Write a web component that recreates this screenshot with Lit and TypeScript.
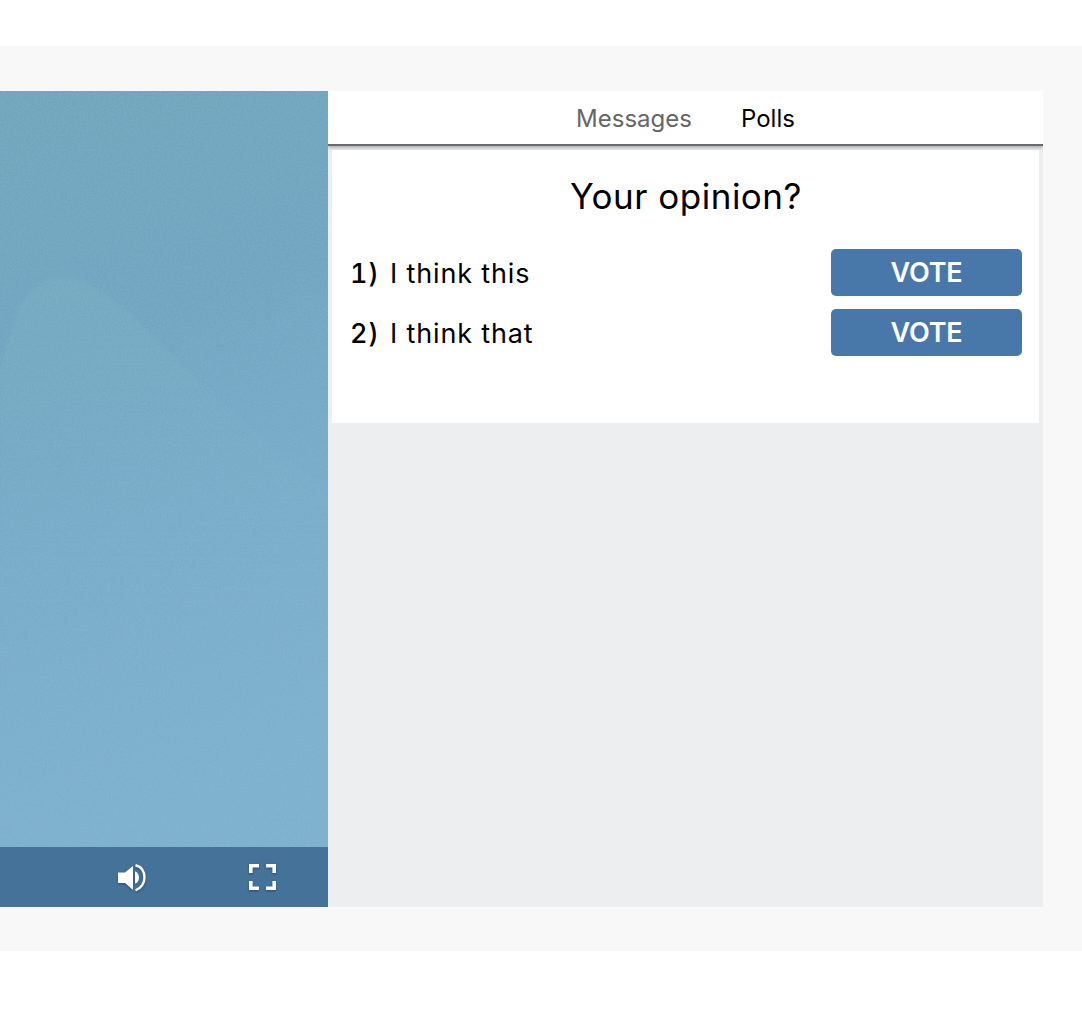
import { LitElement, html, css } from "lit";
import { customElement } from "lit/decorators.js";

@customElement("app-root")
export class AppRoot extends LitElement {
  static styles = css`
    :host { display: block; width: 1082px; height: 1016px; background: #fff; font-family: "Inter", "Noto Sans", sans-serif; color: #000; overflow: hidden; padding-top: 46px; box-sizing: border-box; }
    .band { height: 905px; background: #f8f8f8; display: flex; padding: 45px 39px 44px 0; box-sizing: border-box; }
    .video { width: 328px; flex: none; display: flex; flex-direction: column; overflow: hidden; }
    .scene { flex: 1; display: block; min-height: 0; }
    .bar { height: 60px; background: #447299; display: flex; align-items: center; flex: none; }
    .bar svg { display: block; overflow: visible; filter: drop-shadow(0 1px 1px rgba(0,0,0,.35)); }
    .vol { margin-left: 118px; }
    .full { margin-left: 103px; }
    .panel { flex: 1; display: flex; flex-direction: column; background: #edeef0; min-width: 0; overflow: hidden; }
    .tabs { height: 52px; flex: none; background: #fff; border-bottom: 2px solid #6b6b6b; box-shadow: 0 2px 3px rgba(0,0,0,.25); display: flex; justify-content: center; align-items: center; gap: 49px; font-size: 24px; padding-top: 1px; position: relative; z-index: 1; }
    .tab { color: #000; }
    .tab.dim { color: #666; }
    .card { margin: 4px 4px 0; background: #fff; height: 273px; padding: 24px 17px 0 18px; box-sizing: border-box; }
    h1 { margin: 0 0 31px; font-size: 35px; line-height: 44px; font-weight: 400; letter-spacing: 0.5px; text-align: center; }
    .row { display: flex; align-items: center; height: 47px; margin-bottom: 13px; font-size: 27px; letter-spacing: 0.85px; }
    .num { width: 40px; flex: none; padding-top: 1px; font-weight: 500; font-variant-numeric: tabular-nums; }
    .txt { flex: 1; padding-top: 1px; }
    .vote { width: 191px; height: 47px; flex: none; border: 0; border-radius: 5px; background: #4878aa; color: #fff; font: 600 27px "Inter", "Noto Sans", sans-serif; letter-spacing: -0.2px; padding: 0; }
  `;

  render() {
    return html`
      <div class="band">
        <div class="video">
          <svg class="scene" viewBox="0 0 328 756" preserveAspectRatio="none" aria-hidden="true">
            <defs>
              <linearGradient id="g" x1="0" y1="0" x2="0.15" y2="1">
                <stop offset="0" stop-color="#6ca4ba"/>
                <stop offset="0.35" stop-color="#6da3be"/>
                <stop offset="0.75" stop-color="#78acca"/>
                <stop offset="1" stop-color="#7bafcc"/>
              </linearGradient>
              <linearGradient id="s" x1="0" y1="0" x2="0" y2="1">
                <stop offset="0" stop-color="#75abc0" stop-opacity=".55"/>
                <stop offset="0.6" stop-color="#7aaec8" stop-opacity="0"/>
              </linearGradient>
              <filter id="b"><feGaussianBlur stdDeviation="1.5"/></filter>
              <filter id="n" x="0" y="0" width="100%" height="100%">
                <feTurbulence type="fractalNoise" baseFrequency="0.55" numOctaves="2" seed="4"/>
                <feColorMatrix values="0 0 0 0 .36  0 0 0 0 .58  0 0 0 0 .72  0 0 0 .28 -.02"/>
              </filter>
            </defs>
            <rect width="328" height="756" fill="url(#g)"/>
            <path d="M0 280 C12 230 25 188 60 187 C100 186 130 225 170 262 C205 295 240 330 328 400 L328 756 L0 756 Z" fill="url(#s)" filter="url(#b)"/>
            <rect width="328" height="756" filter="url(#n)"/>
          </svg>
          <div class="bar">
            <svg class="vol" width="28" height="28" viewBox="0 0 28 28" aria-label="Volume">
              <path fill="#fff" d="M0 9.5h7L15 3v24l-8-7H0z"/>
              <path fill="#fff" d="M17 8.5c1.6 0 4 2.5 4 6.2s-2.4 5.8-4 5.8z"/>
              <path fill="none" stroke="#fff" stroke-width="2.4" d="M17.5 2.3c12 2.4 12 21.2 0 25"/>
            </svg>
            <svg class="full" width="27" height="26" viewBox="0 0 27 26" aria-label="Fullscreen">
              <path fill="none" stroke="#fff" stroke-width="3.6" d="M1.8 9V1.8H10M17 1.8h8.2V9M25.2 17v7.2H17M10 24.2H1.8V17"/>
            </svg>
          </div>
        </div>
        <div class="panel">
          <div class="tabs">
            <span class="tab dim">Messages</span>
            <span class="tab">Polls</span>
          </div>
          <div class="card">
            <h1>Your opinion?</h1>
            <div class="row"><span class="num">1)</span><span class="txt">I think this</span><button class="vote">VOTE</button></div>
            <div class="row"><span class="num">2)</span><span class="txt">I think that</span><button class="vote">VOTE</button></div>
          </div>
        </div>
      </div>
    `;
  }
}
